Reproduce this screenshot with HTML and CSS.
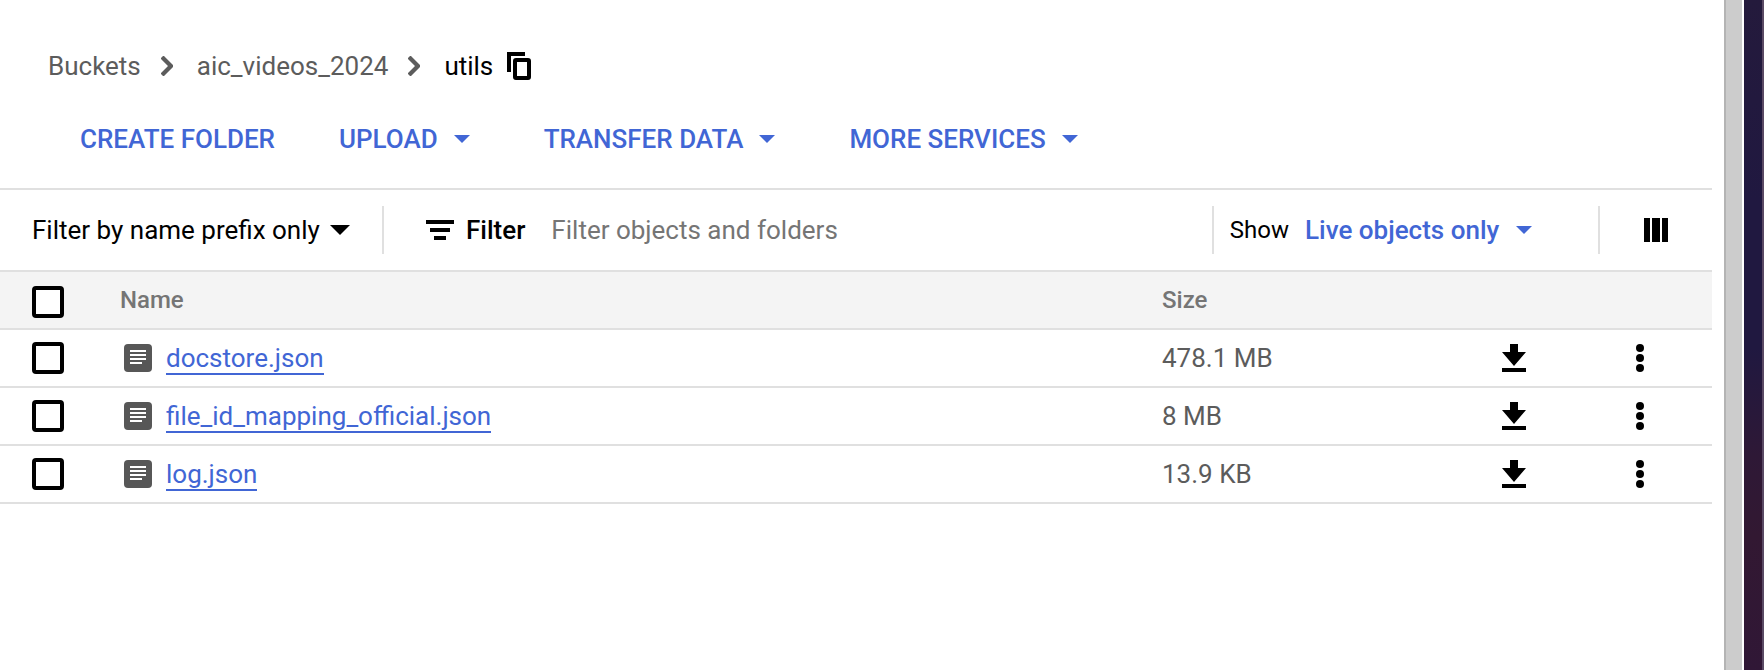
FILE: index.html
```html
<!DOCTYPE html>
<html lang="en">
<head>
<meta charset="utf-8">
<title>utils – Bucket details</title>
<link rel="stylesheet" href="styles.css">
</head>
<body>
<svg class="defs" aria-hidden="true">
  <symbol id="chevron" viewBox="0 0 12 20"><path d="M2 0h1L12 9v2L3 20H2L0 18v-1l7-7-7-7V2z" fill="currentColor"/></symbol>
  <symbol id="caret" viewBox="0 0 16 8"><path d="M0 0h16L8 8z" fill="currentColor"/></symbol>
  <symbol id="file" viewBox="0 0 28 28"><rect width="28" height="28" rx="4" fill="#575757"/><path d="M6 6h16v2H6zM6 10h16v2H6zM6 14h16v2H6zM6 18h12v2H6z" fill="#fff"/></symbol>
  <symbol id="download" viewBox="0 0 24 28"><path d="M8 0h8v8h8L12 22 0 8h8zM0 24h24v4H0z" fill="currentColor"/></symbol>
  <symbol id="more" viewBox="0 0 8 28"><circle cx="4" cy="4" r="4"/><circle cx="4" cy="14" r="4"/><circle cx="4" cy="24" r="4"/></symbol>
</svg>
<div class="window">
  <main class="content">
    <nav class="breadcrumb" aria-label="Breadcrumb">
      <a href="#">Buckets</a>
      <svg class="chevron"><use href="#chevron"/></svg>
      <a href="#">aic_videos_2024</a>
      <svg class="chevron"><use href="#chevron"/></svg>
      <span class="current">utils</span>
      <button class="copy" aria-label="Copy path">
        <svg width="24" height="28" viewBox="0 0 24 28" fill="none" stroke="#000" stroke-width="4"><path d="M18 2H2v18"/><rect x="8" y="8" width="14" height="18" rx="1"/></svg>
      </button>
    </nav>

    <div class="actions">
      <button class="action">CREATE FOLDER</button>
      <button class="action">UPLOAD<svg class="caret"><use href="#caret"/></svg></button>
      <button class="action">TRANSFER DATA<svg class="caret"><use href="#caret"/></svg></button>
      <button class="action">MORE SERVICES<svg class="caret"><use href="#caret"/></svg></button>
    </div>

    <div class="toolbar">
      <select class="prefix" aria-label="Filter type"><option>Filter by name prefix only</option></select>
      <div class="filter">
        <svg width="28" height="20" viewBox="0 0 28 20"><path d="M0 0h28v4H0zM4 8h20v4H4zM8 16h12v4H8z"/></svg>
        <label class="filter-label" for="filter">Filter</label>
        <input class="filter-input" id="filter" type="text" placeholder="Filter objects and folders">
      </div>
      <div class="show">
        <label class="show-label" for="show">Show</label>
        <select class="show-select" id="show"><option>Live objects only</option></select>
      </div>
      <div class="columns">
        <button aria-label="Column display options"><svg width="24" height="24" viewBox="0 0 24 24"><path d="M0 0h6v24H0zM8 0h8v24H8zM18 0h6v24h-6z"/></svg></button>
      </div>
    </div>

    <table class="objects">
      <colgroup><col class="col-check"><col><col class="col-size"><col class="col-download"><col class="col-more"></colgroup>
      <thead>
        <tr><th><input type="checkbox" aria-label="Select all"></th><th>Name</th><th>Size</th><th></th><th></th></tr>
      </thead>
      <tbody>
        <tr>
          <td><input type="checkbox" aria-label="Select docstore.json"></td>
          <td><div class="object"><svg class="file"><use href="#file"/></svg><a href="#">docstore.json</a></div></td>
          <td>478.1 MB</td>
          <td class="icon-cell"><button aria-label="Download docstore.json"><svg class="download"><use href="#download"/></svg></button></td>
          <td class="icon-cell"><button aria-label="More actions"><svg class="more"><use href="#more"/></svg></button></td>
        </tr>
        <tr>
          <td><input type="checkbox" aria-label="Select file_id_mapping_official.json"></td>
          <td><div class="object"><svg class="file"><use href="#file"/></svg><a href="#">file_id_mapping_official.json</a></div></td>
          <td>8 MB</td>
          <td class="icon-cell"><button aria-label="Download file_id_mapping_official.json"><svg class="download"><use href="#download"/></svg></button></td>
          <td class="icon-cell"><button aria-label="More actions"><svg class="more"><use href="#more"/></svg></button></td>
        </tr>
        <tr>
          <td><input type="checkbox" aria-label="Select log.json"></td>
          <td><div class="object"><svg class="file"><use href="#file"/></svg><a href="#">log.json</a></div></td>
          <td>13.9 KB</td>
          <td class="icon-cell"><button aria-label="Download log.json"><svg class="download"><use href="#download"/></svg></button></td>
          <td class="icon-cell"><button aria-label="More actions"><svg class="more"><use href="#more"/></svg></button></td>
        </tr>
      </tbody>
    </table>
  </main>
  <div class="scroll-track"></div>
  <div class="backdrop"></div>
</div>
</body>
</html>
```

FILE: styles.css
```css
* { box-sizing: border-box; }

body {
  margin: 0;
  background: #fff;
  color: #000;
  font: 26px/32px Roboto, sans-serif;
}

button, input, select { font: inherit; color: inherit; }

button {
  display: flex;
  align-items: center;
  padding: 0;
  border: 0;
  background: none;
  cursor: pointer;
}

svg { display: block; flex: none; }

.defs { position: absolute; width: 0; height: 0; }

.window { display: flex; min-height: 100vh; }

.content { flex: 1; min-width: 0; margin-right: 12px; }

.scroll-track {
  width: 18px;
  border-left: 2px solid #b4b4b4;
  background: #ccc;
}

.backdrop {
  width: 20px;
  margin-left: 2px;
  border-right: 2px solid #5a4a64;
  background: linear-gradient(#241a3c, #201840 30%, #201840 52%, #2e1836 68%, #321832 80%, #301736);
}

/* Breadcrumb */
.breadcrumb {
  display: flex;
  align-items: center;
  padding: 50px 48px 0;
}

.breadcrumb a { color: #5c5c5c; text-decoration: none; }

.chevron { width: 12px; height: 20px; margin: 0 24px 0 20px; color: #5c5c5c; }

.copy { margin-left: 14px; }

/* Actions */
.actions {
  display: flex;
  gap: 64px;
  padding: 41px 80px 33px;
  border-bottom: 2px solid #e0e0e0;
}

.action { color: #4166d5; font-weight: 500; }

.caret { width: 16px; height: 8px; margin: 0 10px 0 16px; }

/* Filter toolbar */
.toolbar {
  display: flex;
  align-items: center;
  padding: 16px 0;
  border-bottom: 2px solid #e0e0e0;
}

select {
  appearance: none;
  padding: 0;
  border: 0;
  background: no-repeat right center;
  cursor: pointer;
}

.prefix {
  margin: 0 32px;
  padding-right: 30px;
  background-image: url("data:image/svg+xml,%3Csvg xmlns='http://www.w3.org/2000/svg' width='20' height='10'%3E%3Cpath d='M0 0h20L10 10z'/%3E%3C/svg%3E");
}

.filter, .show, .columns {
  display: flex;
  align-items: center;
  height: 48px;
  border-left: 2px solid #e0e0e0;
}

.filter { flex: 1; min-width: 0; padding-left: 42px; }

.filter-label { margin: 0 26px 0 12px; font-weight: 500; }

.filter-input {
  flex: 1;
  min-width: 0;
  padding: 0;
  border: 0;
  outline: 0;
  background: none;
}

.filter-input::placeholder { color: #757575; opacity: 1; }

.show { padding: 0 66px 0 16px; }

.show-label { margin-right: 16px; font-size: 24px; }

.show-select {
  padding-right: 32px;
  color: #4166d5;
  font-weight: 500;
  background-image: url("data:image/svg+xml,%3Csvg xmlns='http://www.w3.org/2000/svg' width='16' height='8'%3E%3Cpath d='M0 0h16L8 8z' fill='%234166d5'/%3E%3C/svg%3E");
}

.columns { padding: 0 44px; }

/* Objects table */
.objects {
  width: 100%;
  table-layout: fixed;
  border-collapse: separate;
  border-spacing: 0;
}

.col-check { width: 120px; }
.col-size { width: 298px; }
.col-download { width: 108px; }
.col-more { width: 144px; }

.objects th, .objects td {
  height: 58px;
  padding: 0;
  border-bottom: 2px solid #e0e0e0;
  text-align: left;
  vertical-align: middle;
}

.objects th {
  background: #f4f4f4;
  color: #757575;
  font-size: 24px;
  font-weight: 500;
}

.objects td { color: #5c5c5c; }

.objects input {
  appearance: none;
  display: block;
  width: 32px;
  height: 32px;
  margin: 0 0 0 32px;
  border: 4px solid #000;
  border-radius: 4px;
  background: #fff;
}

.objects th input { margin-top: 4px; }

.objects input:checked { background: #000; }

.object { display: flex; align-items: center; gap: 14px; padding-left: 4px; }

.object a {
  padding-top: 2px;
  border-bottom: 2px solid #4166d5;
  color: #4166d5;
  line-height: 30px;
  text-decoration: none;
}

.file { width: 28px; height: 28px; }

.icon-cell button { margin: 0 auto; color: #000; }

.download { width: 24px; height: 28px; }

.more { width: 8px; height: 28px; }
```
